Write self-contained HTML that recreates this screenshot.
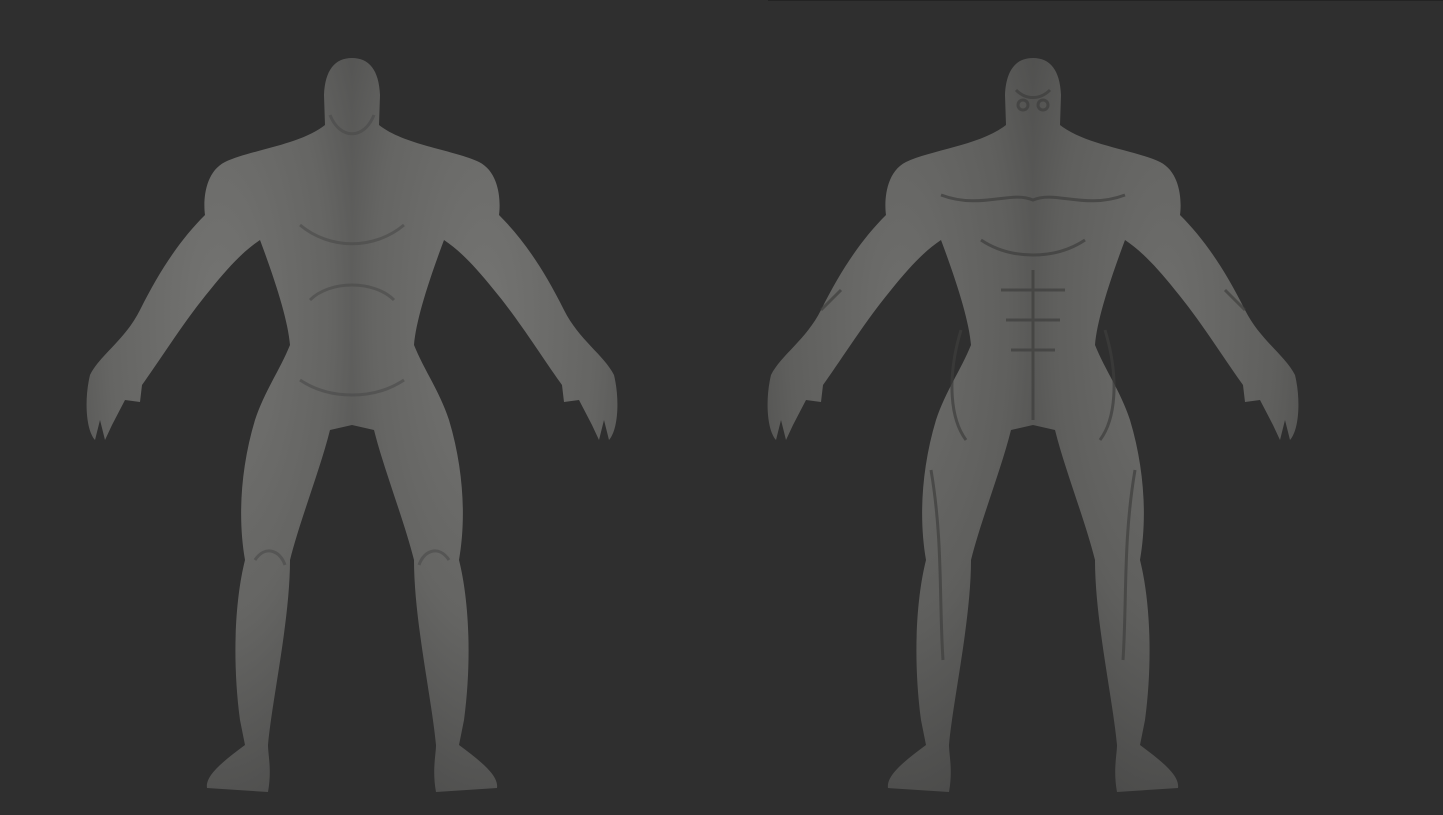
<!DOCTYPE html>
<html><head><meta charset="utf-8"><style>
html,body{margin:0;padding:0;background:#2f2f2f;width:1443px;height:815px;overflow:hidden}
svg{display:block}
</style></head><body>
<svg width="1443" height="815" viewBox="0 0 1443 815" xmlns="http://www.w3.org/2000/svg">
<defs>
<radialGradient id="g" cx="0.5" cy="0.35" r="0.7">
<stop offset="0" stop-color="#747472"/><stop offset="0.6" stop-color="#656563"/><stop offset="1" stop-color="#4e4e4d"/>
</radialGradient>
<radialGradient id="g2" cx="0.5" cy="0.35" r="0.7">
<stop offset="0" stop-color="#6e6e6c"/><stop offset="0.6" stop-color="#5f5f5d"/><stop offset="1" stop-color="#4a4a49"/>
</radialGradient>
<path id="half" d="M352,58 C335,58 325,70 324,95 L325,125 C300,145 250,150 225,162 C205,172 203,200 205,215 C180,240 160,270 140,310 C125,340 100,355 90,375 C84,400 86,430 95,440 L100,420 L105,440 L112,425 L125,400 L140,402 L142,385 C160,360 185,320 210,290 C230,265 245,250 260,240 C275,280 288,320 290,345 C280,370 265,390 255,420 C240,470 238,520 245,560 C235,600 232,660 240,720 L245,745 C225,760 205,775 207,788 L268,792 C272,770 268,755 268,745 C272,700 290,620 290,560 C300,520 320,470 330,430 L352,425 Z"/>
</defs>
<rect width="1443" height="815" fill="#2f2f2f"/>
<rect x="768" y="0" width="675" height="1" fill="#232323"/>
<g fill="url(#g)">
<use href="#half"/>
<use href="#half" transform="translate(704,0) scale(-1,1)"/>
</g>
<g fill="none" stroke="#4a4a49" stroke-width="3" opacity="0.6">
<path d="M300,225 C330,250 374,250 404,225"/>
<path d="M310,300 C330,280 374,280 394,300"/>
<path d="M300,380 C330,400 374,400 404,380"/>
<path d="M330,115 C340,140 364,140 374,115"/>
<path d="M255,560 C265,545 280,550 285,565"/><path d="M449,560 C439,545 424,550 419,565"/>
</g>
<g transform="translate(681,0)">
<g fill="url(#g2)">
<use href="#half"/>
<use href="#half" transform="translate(704,0) scale(-1,1)"/>
</g>
<g fill="none" stroke="#3e3e3d" stroke-width="3" opacity="0.7">
<path d="M335,90 C345,100 359,100 369,90"/><circle cx="342" cy="105" r="5"/><circle cx="362" cy="105" r="5"/>
<path d="M260,195 C300,210 330,190 352,200 C374,190 404,210 444,195"/>
<path d="M300,240 C330,260 374,260 404,240"/>
<path d="M320,290 L384,290 M325,320 L379,320 M330,350 L374,350 M352,270 L352,420"/>
<path d="M280,330 C265,380 270,420 285,440"/><path d="M424,330 C439,380 434,420 419,440"/>
<path d="M250,470 C262,540 258,600 262,660"/><path d="M454,470 C442,540 446,600 442,660"/>
<path d="M140,310 L160,290 M564,310 L544,290"/>
</g>
</g>
</svg>
</body></html>
